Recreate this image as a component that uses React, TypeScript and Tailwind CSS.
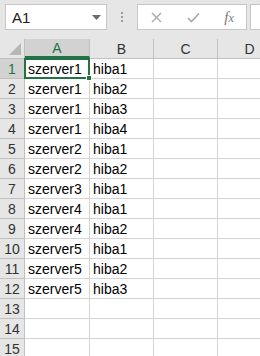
import React from "react";

const data: [string, string][] = [
  ["szerver1", "hiba1"],
  ["szerver1", "hiba2"],
  ["szerver1", "hiba3"],
  ["szerver1", "hiba4"],
  ["szerver2", "hiba1"],
  ["szerver2", "hiba2"],
  ["szerver3", "hiba1"],
  ["szerver4", "hiba1"],
  ["szerver4", "hiba2"],
  ["szerver5", "hiba1"],
  ["szerver5", "hiba2"],
  ["szerver5", "hiba3"],
  ["", ""],
  ["", ""],
  ["", ""],
  ["", ""],
];

const font = { fontFamily: '"Liberation Sans", Arial, sans-serif' };

export default function App() {
  return (
    <div className="w-[260px] h-[356px] overflow-hidden bg-white relative" style={font}>
      {/* Formula bar */}
      <div className="h-[39px] bg-[#e6e6e6] flex items-start pt-[4px] pl-[5px]">
        <div className="w-[102px] h-[26px] bg-white border border-[#c6c6c6] flex items-center justify-between pl-[6px] pr-[5px] shrink-0">
          <span className="text-[15px] text-[#222] leading-none">A1</span>
          <svg width="9" height="5" viewBox="0 0 9 5">
            <path d="M0 0 H9 L4.5 5 Z" fill="#6b6b6b" />
          </svg>
        </div>
        <div className="w-[30px] h-[26px] flex flex-col items-center justify-center gap-[2px] shrink-0">
          <div className="w-[2px] h-[2px] bg-[#9b9b9b]" />
          <div className="w-[2px] h-[2px] bg-[#9b9b9b]" />
          <div className="w-[2px] h-[2px] bg-[#9b9b9b]" />
        </div>
        <div className="w-[110px] h-[26px] bg-white border border-[#c6c6c6] flex items-center shrink-0">
          <div className="w-[36px] flex justify-center">
            <svg width="11" height="11" viewBox="0 0 11 11">
              <path d="M1 1 L10 10 M10 1 L1 10" stroke="#a8a8a8" strokeWidth="1.4" />
            </svg>
          </div>
          <div className="w-[38px] flex justify-center">
            <svg width="13" height="11" viewBox="0 0 13 11">
              <path d="M1 6 L4.5 9.5 L12 1.5" stroke="#a8a8a8" strokeWidth="1.6" fill="none" />
            </svg>
          </div>
          <div className="w-[34px] flex justify-center">
            <span
              className="text-[15px] italic text-[#7a7a7a] leading-none"
              style={{ fontFamily: '"Liberation Serif", "Times New Roman", serif' }}
            >
              f<span className="text-[12px]">x</span>
            </span>
          </div>
        </div>
        <div className="ml-[3px] w-[40px] h-[26px] bg-white border border-[#c6c6c6] shrink-0" />
      </div>

      {/* Column header row */}
      <div className="flex h-[20px] bg-[#e6e6e6] border-b border-[#c0c0c0]">
        <div className="w-[25px] h-full border-r border-[#c0c0c0] flex items-end justify-end pr-[3px] pb-[3px] shrink-0">
          <svg width="12" height="12" viewBox="0 0 12 12">
            <path d="M12 0 L12 12 L0 12 Z" fill="#b6b6b6" />
          </svg>
        </div>
        <div className="w-[65px] h-full bg-[#d2d2d2] border-b-2 border-[#217346] border-r border-r-[#c0c0c0] flex items-center justify-center shrink-0">
          <span className="text-[14px] text-[#217346] leading-none">A</span>
        </div>
        <div className="w-[64px] h-full border-r border-[#c0c0c0] flex items-center justify-center shrink-0">
          <span className="text-[14px] text-[#333] leading-none">B</span>
        </div>
        <div className="w-[64px] h-full border-r border-[#c0c0c0] flex items-center justify-center shrink-0">
          <span className="text-[14px] text-[#333] leading-none">C</span>
        </div>
        <div className="w-[64px] h-full border-r border-[#c0c0c0] flex items-center justify-center shrink-0">
          <span className="text-[14px] text-[#333] leading-none">D</span>
        </div>
      </div>

      {/* Rows */}
      {data.map((row, i) => (
        <div key={i} className="flex h-[20px]">
          <div
            className={
              i === 0
                ? "w-[25px] h-full bg-[#d2d2d2] border-r border-b border-[#c0c0c0] flex items-center justify-center shrink-0"
                : "w-[25px] h-full bg-[#e6e6e6] border-r border-b border-[#c0c0c0] flex items-center justify-center shrink-0"
            }
          >
            <span className={i === 0 ? "text-[14px] text-[#217346] leading-none" : "text-[14px] text-[#333] leading-none"}>
              {i + 1}
            </span>
          </div>
          <div className="w-[65px] h-full border-r border-b border-[#d4d4d4] flex items-end pl-[3px] pb-[2px] shrink-0">
            <span className="text-[14px] text-black leading-none">{row[0]}</span>
          </div>
          <div className="w-[64px] h-full border-r border-b border-[#d4d4d4] flex items-end pl-[3px] pb-[2px] shrink-0">
            <span className="text-[14px] text-black leading-none">{row[1]}</span>
          </div>
          <div className="w-[64px] h-full border-r border-b border-[#d4d4d4] shrink-0" />
          <div className="w-[64px] h-full border-r border-b border-[#d4d4d4] shrink-0" />
        </div>
      ))}

      {/* Selection */}
      <div className="absolute left-[24px] top-[58px] w-[66px] h-[21px] border-2 border-[#217346] pointer-events-none" />
      <div className="absolute left-[86px] top-[75px] w-[6px] h-[6px] bg-[#217346] border border-white pointer-events-none" />
    </div>
  );
}
